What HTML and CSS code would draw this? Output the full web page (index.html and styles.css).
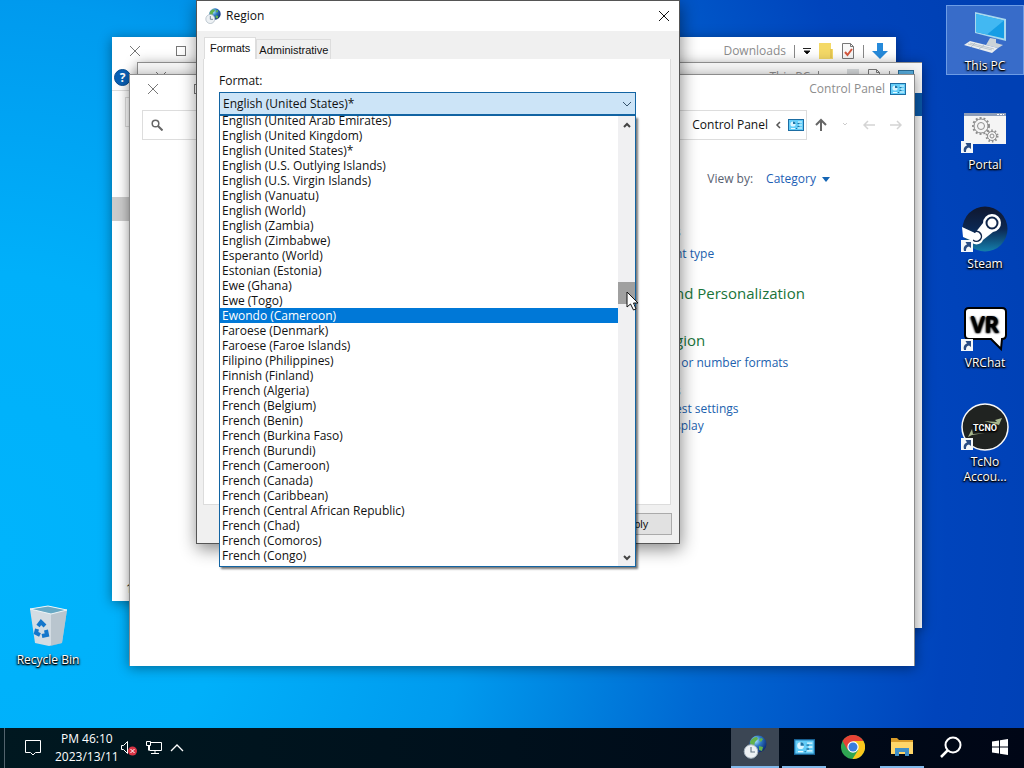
FILE: index.html
```html
<!DOCTYPE html>
<html lang="en">
<head>
<meta charset="utf-8">
<title>Region</title>
<link rel="stylesheet" href="styles.css">
</head>
<body>
<svg class="sprite" width="0" height="0" aria-hidden="true">
  <symbol id="panel" viewBox="0 0 16 12">
    <rect width="16" height="12" fill="#1c6da3"/><rect x="1" y="1" width="14" height="10" fill="#63cdf8"/>
    <circle cx="5" cy="5" r="2.600" fill="#d9f4ff"/><path d="M5 5V2.400A2.600 2.600 0 0 1 7.600 5z" fill="#1b75a8"/>
    <path d="M10 3h4M11 6h3M3 9.500h4M10 9h4" stroke="#e8faff"/><path d="M9.500 4.500h2M9.500 7.500h2M8 9.500h1" stroke="#2376a4"/>
  </symbol>
  <symbol id="close" viewBox="0 0 12 12"><path d="M1 1l10 10M11 1L1 11" fill="none" stroke="currentColor"/></symbol>
  <symbol id="square" viewBox="0 0 12 12"><rect x="1.500" y="1.500" width="9" height="9" fill="none" stroke="currentColor"/></symbol>
  <symbol id="globe" viewBox="0 0 24 24">
    <radialGradient id="gl" cx=".35" cy=".3" r=".75"><stop offset="0" stop-color="#b4ecff"/><stop offset=".45" stop-color="#2d78c4"/><stop offset="1" stop-color="#0a2470"/></radialGradient>
    <circle cx="15" cy="9" r="8.500" fill="url(#gl)"/>
    <path d="M7 7c1-3 4-5 7-5l1 2-3 3-1 4-3 1zM18 3l2 1-2 3-2-2zM16 11l4 1-1 4-3-1z" fill="#63b24c"/>
    <circle cx="8" cy="16.500" r="6.800" fill="#edf1f4" stroke="#a5b2be"/><path d="M8 12v5h4" fill="none" stroke="#667786" stroke-width="1.200"/>
  </symbol>
  <symbol id="shortcut" viewBox="0 0 12 12"><rect width="12" height="12" fill="#f4f7fa"/><path d="M3 11C2 7 4 5 6 4.500L4.500 2H10v6L8 6.500C5.500 7 5 8.500 5 11z" fill="#294c83"/></symbol>
  <symbol id="page" viewBox="0 0 14 18"><path d="M1.500 1.500h8l3 3v12h-11z" fill="#f8f8f8" stroke="#777"/><path d="M9.500 1.500v3h3" fill="none" stroke="#777"/><path d="M4 10l2.500 3L11 7" fill="none" stroke="#d4573d" stroke-width="2"/></symbol>
  <symbol id="folder" viewBox="0 0 14 18"><path d="M0 1h12v6h2v10H0z" fill="#f4d967"/><path d="M12 7v9" stroke="#d8b63e"/></symbol>
</svg>

<main class="desktop">
  <nav class="shortcuts" aria-label="Desktop">
    <a class="shortcut selected" href="#pc">
      <svg width="48" height="48" viewBox="0 0 48 48"><path d="M14 2l31 7v22l-31-8z" fill="#a8d8ee"/><path d="M15 4l28 6.500v18L15 22z" fill="#159de5"/><path d="M15 4l28 6.500-17 14L15 22z" fill="#42b8f2"/><path d="M29 28l6 1v4l7 2-5 3-12-3z" fill="#cbd3d8"/><path d="M9 31l28 7-6 5-28-8z" fill="#e9edf0"/><path d="M9 33l24 6M7 34l24 6M15 32l-5 5M23 35l-5 4" stroke="#a7b4be" stroke-width=".7"/></svg>
      <span>This PC</span></a>
    <a class="shortcut" href="#portal">
      <svg width="48" height="48" viewBox="0 0 48 48"><rect x="3" y="4" width="42" height="31" fill="#f5f5f5"/><path d="M3 4h42v3H3z" fill="#8d9db8"/><path d="M36 5.500h7" stroke="#fff" stroke-dasharray="2 1"/><g fill="none" stroke="#8d8d8d"><circle cx="20" cy="17" r="7"/><circle cx="20" cy="17" r="3.500"/><circle cx="20" cy="17" r="8" stroke-width="2" stroke-dasharray="2 2"/><circle cx="31" cy="27" r="4.500"/><circle cx="31" cy="27" r="2"/><circle cx="31" cy="27" r="5.500" stroke-width="2" stroke-dasharray="1.500 2"/></g><use href="#shortcut" x="0" y="32" width="12" height="12"/></svg>
      <span>Portal</span></a>
    <a class="shortcut" href="#steam">
      <svg width="48" height="48" viewBox="0 0 48 48"><defs><linearGradient id="st" x2="0" y2="1"><stop stop-color="#10172e"/><stop offset=".5" stop-color="#0c2853"/><stop offset="1" stop-color="#147fac"/></linearGradient></defs><circle cx="24" cy="21" r="22.500" fill="url(#st)"/><path d="M1 19l13 6 8-10A9 9 0 1 1 32 24l-10 8a7 7 0 0 1-13 0l-7-3z" fill="#fff"/><circle cx="31" cy="15" r="5.500" fill="#fff" stroke="#10264b" stroke-width="2"/><path d="M13 24a5 5 0 1 1-1 8" fill="none" stroke="#10264b" stroke-width="1.500"/><use href="#shortcut" x="0" y="32" width="12" height="12"/></svg>
      <span>Steam</span></a>
    <a class="shortcut" href="#vrchat">
      <svg width="48" height="48" viewBox="0 0 48 48"><path d="M8 1h33q4 0 4 4v23q0 4-4 4l-1 10-10-10H8q-4 0-4-4V5q0-4 4-4z" fill="#fff" stroke="#000" stroke-width="2"/><text x="24" y="25" class="vr" text-anchor="middle">VR</text><use href="#shortcut" x="0" y="32" width="12" height="12"/></svg>
      <span>VRChat</span></a>
    <a class="shortcut" href="#tcno">
      <svg width="48" height="48" viewBox="0 0 48 48"><circle cx="24" cy="21" r="23" fill="#202321" stroke="#f8f8f8" stroke-width="1.500"/><path d="M7 31l4-8 1 5 12-1-13 2zM41 12l-7 2 2 2-13-1 15 4z" fill="#a8b78e"/><text x="24" y="25" class="tcno" text-anchor="middle">TCNO</text><use href="#shortcut" x="0" y="32" width="12" height="12"/></svg>
      <span>TcNo<br>Accou...</span></a>
  </nav>
  <a class="shortcut bin" href="#bin">
    <svg width="48" height="48" viewBox="0 0 48 48"><path d="M6 5l18-3 19 4-5 33-13 3-14-3z" fill="#d3dce3"/><path d="M27 10l16-4-5 33-11 3z" fill="#a9b6c0" opacity=".6"/><path d="M6 5l18-3 19 4-16 4z" fill="#68a9c5" stroke="#edf5f8"/><g fill="none" stroke="#1476cb" stroke-width="4"><path d="M14 22l3-4 4 4M22 26l1 5-5 1M16 31l-4-2 1-4"/></g></svg>
    <span>Recycle Bin</span></a>

  <section class="window downloads" aria-label="Downloads">
    <header class="titlebar">
      <div class="controls"><button aria-label="Close"><svg width="12" height="12"><use href="#close"/></svg></button><button aria-label="Maximize"><svg width="12" height="12"><use href="#square"/></svg></button></div>
      <div class="quick"><span>Downloads</span><i class="rule"></i><svg width="8" height="7"><path d="M0 .5h8M1 3h6L4 6z" stroke="#222"/></svg><svg width="14" height="18"><use href="#folder"/></svg><svg width="14" height="18"><use href="#page"/></svg><i class="rule"></i><svg width="16" height="18"><path d="M5 1h6v8h5l-8 8-8-8h5z" fill="#268ada"/></svg></div>
    </header>
    <div class="ribbon"><button class="help" aria-label="Help">?</button></div>
    <div class="content"><div class="search-edge"></div><div class="row-selected"></div></div>
    <footer class="status">1</footer>
  </section>

  <section class="window computer" aria-label="This PC">
    <header class="titlebar">
      <div class="controls"><button aria-label="Close"><svg width="12" height="12"><use href="#close"/></svg></button></div>
      <div class="quick"><span>This PC</span><i class="rule"></i><svg width="12" height="16"></svg><svg width="12" height="16"><rect width="12" height="16" fill="#d2d5d7"/></svg><svg width="14" height="18"><use href="#page"/></svg><i class="rule"></i><svg width="16" height="14"><rect width="16" height="12" fill="#2b6d97"/><rect x="1" y="1" width="14" height="10" fill="#58afe1"/></svg></div>
    </header>
    <div class="file-tab"></div>
  </section>

  <section class="window control-panel" aria-label="Control Panel">
    <header class="titlebar">
      <div class="controls"><button aria-label="Close"><svg width="12" height="12"><use href="#close"/></svg></button><button aria-label="Maximize"><svg width="12" height="12"><use href="#square"/></svg></button></div>
      <div class="title"><span>Control Panel</span><svg width="16" height="12"><use href="#panel"/></svg></div>
    </header>
    <div class="toolbar">
      <div class="address"><svg width="12" height="12" viewBox="0 0 12 12" fill="none" stroke="#666" stroke-width="1.500"><circle cx="4.500" cy="4.500" r="3.300"/><path d="M7 7l4.500 4.500" stroke-width="2"/></svg>
        <div class="path"><span>Control Panel</span><svg width="6" height="8"><path d="M5 1L2 4l3 3" fill="none" stroke="#555" stroke-width="1.500"/></svg><svg width="16" height="12"><use href="#panel"/></svg></div></div>
      <div class="navigation">
        <button aria-label="Up"><svg width="12" height="14"><path d="M6 13V2M1 7l5-5 5 5" fill="none" stroke="#666" stroke-width="2"/></svg></button>
        <button aria-label="Recent"><svg width="6" height="4"><path d="M1 0l2 2 2-2" fill="none" stroke="#ccc"/></svg></button>
        <button aria-label="Back"><svg width="12" height="10"><path d="M12 5H1M5 1L1 5l4 4" fill="none" stroke="#d4d4d4" stroke-width="1.500"/></svg></button>
        <button aria-label="Forward"><svg width="12" height="10"><path d="M0 5h11M7 1l4 4-4 4" fill="none" stroke="#d4d4d4" stroke-width="1.500"/></svg></button>
      </div>
    </div>
    <div class="view"><span>View by:</span><button>Category <svg width="8" height="5"><path d="M0 0h8L4 5z" fill="#1465b4"/></svg></button></div>
    <div class="categories">
      <div class="group first"><a class="device" href="#programs">s</a><a href="#type">nt type</a></div>
      <div class="group appearance"><a class="heading" href="#appearance">nd Personalization</a></div>
      <div class="group clock"><a class="heading" href="#clock">gion</a><a href="#formats">, or number formats</a></div>
      <div class="group access"><a class="device" href="#access">s</a><a href="#settings">est settings</a><a href="#display">splay</a></div>
    </div>
  </section>

  <section class="window region" role="dialog" aria-labelledby="region-title">
    <header class="region-title"><svg width="16" height="16"><use href="#globe"/></svg><h1 id="region-title">Region</h1><button aria-label="Close"><svg width="12" height="12"><use href="#close"/></svg></button></header>
    <div class="tabs" role="tablist"><button class="tab active" role="tab" aria-selected="true">Formats</button><button class="tab" role="tab" aria-selected="false">Administrative</button></div>
    <div class="sheet" role="tabpanel">
      <label for="format">Format:</label>
      <div class="combo">
        <select id="format"><option>English (United States)*</option></select>
        <svg class="chevron" width="10" height="6"><path d="M1 1l4 4 4-4" fill="none" stroke="#35536d"/></svg>
        <div class="popup">
          <ul role="listbox" aria-label="Format">
            <li role="option">English (United Arab Emirates)</li><li role="option">English (United Kingdom)</li><li role="option">English (United States)*</li><li role="option">English (U.S. Outlying Islands)</li><li role="option">English (U.S. Virgin Islands)</li><li role="option">English (Vanuatu)</li><li role="option">English (World)</li><li role="option">English (Zambia)</li><li role="option">English (Zimbabwe)</li><li role="option">Esperanto (World)</li><li role="option">Estonian (Estonia)</li><li role="option">Ewe (Ghana)</li><li role="option">Ewe (Togo)</li><li role="option" aria-selected="true">Ewondo (Cameroon)</li><li role="option">Faroese (Denmark)</li><li role="option">Faroese (Faroe Islands)</li><li role="option">Filipino (Philippines)</li><li role="option">Finnish (Finland)</li><li role="option">French (Algeria)</li><li role="option">French (Belgium)</li><li role="option">French (Benin)</li><li role="option">French (Burkina Faso)</li><li role="option">French (Burundi)</li><li role="option">French (Cameroon)</li><li role="option">French (Canada)</li><li role="option">French (Caribbean)</li><li role="option">French (Central African Republic)</li><li role="option">French (Chad)</li><li role="option">French (Comoros)</li><li role="option">French (Congo)</li>
          </ul>
          <div class="scrollbar">
            <button aria-label="Scroll up"><svg width="8" height="6"><path d="M1 5l3-3 3 3" fill="none" stroke="#444" stroke-width="2"/></svg></button>
            <div class="track"><div class="thumb"></div></div>
            <button aria-label="Scroll down"><svg width="8" height="6"><path d="M1 1l3 3 3-3" fill="none" stroke="#444" stroke-width="2"/></svg></button>
          </div>
        </div>
      </div>
    </div>
    <footer class="actions"><button>Apply</button></footer>
  </section>
  <svg class="pointer" width="13" height="20" aria-hidden="true"><path d="M1 1v15l3.500-3 3 6 2.500-1-2.500-6H12z" fill="#fff" stroke="#111"/></svg>
</main>

<footer class="taskbar">
  <div class="tray">
    <button aria-label="Notifications"><svg width="18" height="18"><path d="M1.500 1.500h15v12h-5L9 16l-2.500-2.500h-5z" fill="none" stroke="#fff"/></svg></button>
    <time><span>PM 46:10</span><span>2023/13/11</span></time>
    <div class="indicators">
      <button aria-label="Volume muted"><svg width="18" height="16"><path d="M1.500 5.500h2l4-4v12l-4-4h-2z" fill="none" stroke="#fff"/><circle cx="12.500" cy="11" r="4.500" fill="#d93445"/><path d="M10.500 9l4 4m0-4l-4 4" stroke="#fff"/></svg></button>
      <button aria-label="Network"><svg width="18" height="16"><path d="M5 2.500h11.500v8H4.500V6M10 10.500v3M6 13.500h8M1.500 1.500h4v4h-4zM3.500 5.500v5" fill="none" stroke="#fff"/></svg></button>
      <button aria-label="Show hidden icons"><svg width="14" height="8"><path d="M1 7l6-6 6 6" fill="none" stroke="#fff" stroke-width="1.300"/></svg></button>
    </div>
  </div>
  <div class="apps">
    <button class="app current" aria-label="Region"><svg width="24" height="24"><use href="#globe"/></svg></button>
    <button class="app open" aria-label="Control Panel"><svg width="21" height="16"><use href="#panel"/></svg></button>
    <button class="app" aria-label="Chrome"><svg width="24" height="24" viewBox="0 0 24 24"><circle cx="12" cy="12" r="12" fill="#2fa552"/><path d="M12 12L1.600 6A12 12 0 0 1 22.400 6z" fill="#e64235"/><path d="M12 6h10.400A12 12 0 0 1 11.500 24L17.200 15z" fill="#fbc71d"/><path d="M1.600 6l5 9L12 6z" fill="#e64235"/><circle cx="12" cy="12" r="5.700" fill="#fff"/><circle cx="12" cy="12" r="4.500" fill="#397ddd"/></svg></button>
    <button class="app open" aria-label="File Explorer"><svg width="22" height="20"><path d="M0 1h6l2 2h14v14H0z" fill="#d99c29"/><path d="M0 5h22v12H0z" fill="#ffd669"/><path d="M4 19v-8h14v8h-4v-4H8v4z" fill="#408fc7"/></svg></button>
    <button class="app" aria-label="Search"><svg width="22" height="22"><circle cx="13" cy="9" r="7.500" fill="none" stroke="#fff" stroke-width="2"/><path d="M7.500 14.500L1 21" stroke="#fff" stroke-width="2.500"/></svg></button>
    <button class="app" aria-label="Start"><svg width="16" height="16"><path d="M0 2.500l7-1V7.500H0zM8 1.300L16 0v7.500H8zM0 8.500h7v6l-7-1zM8 8.500h8V16l-8-1.300z" fill="#fff"/></svg></button>
  </div>
</footer>
</body>
</html>
```

FILE: styles.css
```css
* { box-sizing: border-box; }
body { margin: 0; height: 100vh; display: flex; flex-direction: column; overflow: hidden; font: 12px/16px "Open Sans", "Noto Sans", sans-serif; color: #111; background: #0078d7; }
svg { display: block; flex: none; }
.sprite { position: absolute; }
button { padding: 0; border: 0; background: none; font: inherit; color: inherit; }
a { text-decoration: none; }
.desktop { position: relative; flex: 1; min-height: 0; overflow: hidden; background: radial-gradient(ellipse 105% 170% at 0 75%, #00b4fc 0, #00b0fa 22%, #009aee 44%, #0084e0 54%, #0068d2 66%, #0056c8 77%, #0044bc 88%, #0040b4 100%); }

.shortcuts { position: absolute; top: 5px; right: 0; display: flex; flex-direction: column; gap: 29px; }
.shortcut { width: 78px; height: 70px; padding-top: 5px; display: flex; flex-direction: column; align-items: center; color: #fff; line-height: 15px; text-align: center; text-shadow: 1px 1px 2px #000, 0 1px 1px #000, -1px 1px 2px #000; }
.shortcut > svg { overflow: visible; }
.shortcut.selected { background: #5482d3aa; outline: 1px solid #6d9ce5; outline-offset: -1px; }
.bin { position: absolute; left: 9px; bottom: 59px; }
.bin span { white-space: nowrap; }
.vr { font: 600 22px "Open Sans", sans-serif; fill: #000; }
.tcno { font: bold 9px Roboto, sans-serif; fill: #fff; }

.window { position: absolute; background: #fff; box-shadow: 0 2px 12px #0006; border: 1px solid #8c8c8c; overflow: hidden; }
.titlebar { display: flex; align-items: center; justify-content: space-between; height: 28px; padding: 0 8px 0 17px; color: #8d8d8d; }
.controls { display: flex; gap: 34px; color: #777; }
.quick { display: flex; align-items: center; gap: 8px; }
.title { display: flex; align-items: center; gap: 5px; }
.rule { width: 1px; height: 13px; background: #888; }
.downloads { left: 112px; top: 37px; width: 784px; height: 564px; display: flex; flex-direction: column; border: 0; }
.ribbon { height: 26px; padding: 4px 2px; border-bottom: 1px solid #ddd; }
.help { width: 17px; height: 17px; border-radius: 50%; background: #0961b6; border: 1px solid #084e92; color: #fff; font-weight: bold; line-height: 14px; }
.content { flex: 1; padding-top: 6px; }
.search-edge { height: 30px; margin-left: 13px; border: 1px solid #ddd; }
.row-selected { height: 24px; margin-top: 70px; background: #ccc; }
.status { padding: 0 14px 4px; }
.computer { left: 137px; top: 62px; width: 785px; height: 566px; border-right: 0; border-bottom: 0; background: #f5f5f5; }
.file-tab { height: 23px; margin-top: 2px; background: #0a57a4; }
.control-panel { left: 129px; top: 74px; width: 786px; height: 592px; border-bottom: 0; }
.toolbar { display: flex; align-items: center; height: 30px; margin: 7px 12px 0; gap: 8px; }
.address { flex: 1; height: 30px; display: flex; justify-content: space-between; align-items: center; padding: 0 2px 0 8px; border: 1px solid #ddd; }
.path { display: flex; align-items: center; gap: 7px; }
.navigation { display: flex; align-items: center; gap: 15px; }
.view { display: flex; justify-content: flex-end; gap: 13px; margin: 31px 84px 0 0; color: #586170; }
.view button { display: flex; align-items: center; gap: 6px; color: #1d60b5; }
.categories { padding: 36px 0 0 545px; }
.group { display: flex; flex-direction: column; align-items: flex-start; }
.group a { color: #215fae; line-height: 17px; }
.group .device { color: #567; line-height: 18px; }
.group .heading { font-size: 15px; line-height: 22px; color: #19743a; }
.first { gap: 4px; }
.appearance { margin-top: 20px; }
.clock { margin-top: 25px; gap: 3px; }
.access { margin-top: 11px; }

.region { left: 196px; top: 0; width: 484px; height: 544px; display: flex; flex-direction: column; overflow: visible; background: #f0f0f0; border-color: #555; box-shadow: 1px 5px 16px #0007; }
.region-title { display: flex; align-items: center; height: 30px; padding: 0 9px 0 8px; gap: 5px; background: #fff; }
.region-title h1 { flex: 1; margin: 0; font-size: 12px; font-weight: normal; }
.tabs { display: flex; align-items: flex-end; height: 28px; padding-left: 7px; font: 11px/16px "Liberation Sans", sans-serif; }
.tab { height: 20px; padding: 0 2px; border: 1px solid #ddd; border-bottom: 0; }
.tab.active { height: 22px; padding: 0 5px 2px; background: #fff; }
.sheet { flex: 1; margin: 0 8px 0 6px; padding: 14px 34px 0 15px; background: #fff; border: 1px solid #dcdcdc; border-top: 0; }
.sheet label { display: block; height: 19px; }
.combo { position: relative; }
.combo select { appearance: none; display: block; width: 100%; height: 24px; padding: 0 3px; border: 1px solid #1264a3; border-bottom-width: 2px; border-radius: 0; background: #cce4f7; color: #111; font: inherit; outline: 0; }
.chevron { position: absolute; right: 4px; top: 9px; }
.popup { position: absolute; z-index: 1; top: 100%; left: 0; right: 0; height: 451px; display: flex; overflow: hidden; background: #fff; border: 1px solid #1264a3; border-top: 0; box-shadow: 2px 2px 2px #0008; }
.popup ul { flex: 1; display: flex; flex-direction: column; justify-content: flex-end; margin: 0; padding: 0 0 3px; list-style: none; }
.popup li { flex: none; padding-left: 2px; line-height: 15px; }
.popup li[aria-selected="true"] { background: #0078d7; color: #fff; }
.scrollbar { width: 17px; display: flex; flex-direction: column; background: #f0f0f2; }
.scrollbar button { height: 17px; display: grid; place-items: center; }
.track { flex: 1; padding-top: 149px; }
.thumb { height: 22px; background: #a0a0a0; }
.actions { display: flex; justify-content: flex-end; padding: 8px 7px; }
.actions button { width: 75px; height: 22px; border: 1px solid #aaa; background: #e1e1e1; font: 11px/16px "Liberation Sans", sans-serif; }
.pointer { position: absolute; left: 626px; top: 291px; z-index: 2; }

.taskbar { flex: none; height: 40px; display: flex; justify-content: space-between; background: linear-gradient(90deg, #001820, #00101c 50%, #000616); color: #fff; }
.tray { display: flex; align-items: center; gap: 13px; margin-left: 4px; padding-left: 19px; border-left: 1px solid #52636d; }
.tray time { display: flex; flex-direction: column; align-items: center; line-height: 18px; }
.indicators { display: flex; align-items: center; gap: 7px; margin-left: -12px; }
.apps { display: flex; gap: 1px; }
.app { width: 48px; display: grid; place-items: center; border-bottom: 2px solid transparent; }
.app.current { background: #3b4654; border-color: #82b9eb; }
.app.open { border-image: linear-gradient(90deg, transparent 4px, #82b9eb 4px 44px, transparent 44px) 2; }
```
